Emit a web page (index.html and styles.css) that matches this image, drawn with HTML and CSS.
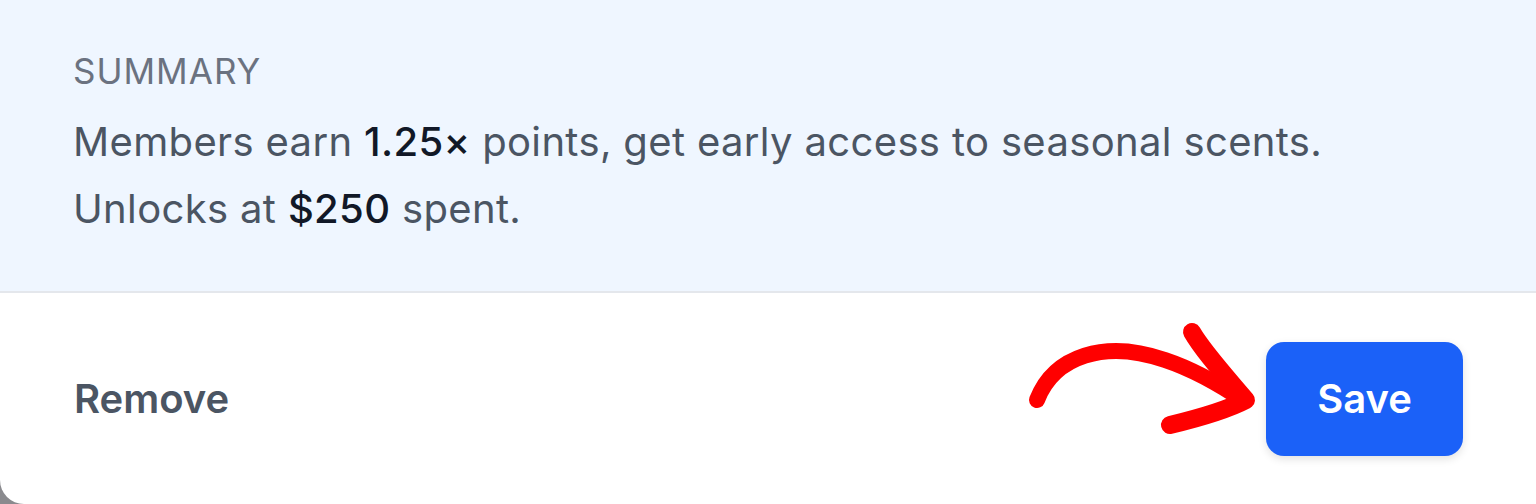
FILE: index.html
```html
<!DOCTYPE html>
<html lang="en">
<head>
  <meta charset="UTF-8">
  <meta name="viewport" content="width=device-width, initial-scale=1.0">
  <title>Tier summary</title>
  <link rel="stylesheet" href="styles.css">
</head>
<body>
  <div class="tier-card">
    <!-- Summary panel -->
    <div class="summary-panel">
      <div class="summary-label">SUMMARY</div>
      <p class="summary-text">
        Members earn <strong>1.25×</strong> points, get early access to seasonal scents.<br>
        Unlocks at <strong>$250</strong> spent.
      </p>
    </div>
    <!-- Actions -->
    <div class="card-actions">
      <button class="btn-remove" type="button">Remove</button>
      <button class="btn-save" type="button">Save</button>
      <svg class="hint-arrow" viewBox="1020 310 240 130" aria-hidden="true">
        <path d="M1037,400 C1054,356 1105,339 1165,360 C1195,370 1222,386 1244,401" />
        <path d="M1192,332 C1203,351 1223,373 1246,400 C1225,411 1195,419 1170,425" class="head" />
      </svg>
    </div>
  </div>
</body>
</html>
```

FILE: styles.css
```css
body {
  margin: 0;
  background: #8a8a8e;
  font-family: Inter, 'Noto Sans', sans-serif;
  overflow: hidden;
}
.tier-card {
  width: 1536px;
  height: 504px;
  background: #fff;
  border-radius: 0 0 0 24px;
  overflow: hidden;
}
.summary-panel {
  background: #eff6ff;
  padding: 49px 74px 49px 73px;
  border-bottom: 2px solid #e4e7ec;
  height: 193px;
}
.summary-label {
  font-size: 35px;
  line-height: 44px;
  letter-spacing: 1px;
  color: #6b7280;
}
.summary-text {
  margin: 15px 0 0 0;
  font-size: 40px;
  line-height: 67px;
  letter-spacing: 0.35px;
  color: #4b5563;
}
.summary-text strong {
  font-weight: 500;
  color: #111827;
}
.card-actions {
  position: relative;
  height: 211px;
  display: flex;
  align-items: center;
  justify-content: space-between;
  padding: 0 73px 0 74px;
}
.btn-remove {
  background: none;
  border: none;
  padding: 0;
  font-family: inherit;
  font-size: 40px;
  font-weight: 600;
  color: #4b5563;
  cursor: pointer;
}
.btn-save {
  width: 197px;
  height: 114px;
  background: #1b61f8;
  border: none;
  border-radius: 18px;
  color: #fff;
  font-family: inherit;
  font-size: 40px;
  font-weight: 600;
  box-shadow: 0 3px 8px rgba(0,0,0,0.12);
  cursor: pointer;
}
.hint-arrow {
  position: absolute;
  left: 1020px;
  top: 17px;
  width: 240px;
  height: 130px;
  fill: none;
  stroke: #ff0000;
  stroke-width: 16;
  stroke-linecap: round;
  stroke-linejoin: round;
}
.hint-arrow .head {
  stroke-width: 18;
}
```
